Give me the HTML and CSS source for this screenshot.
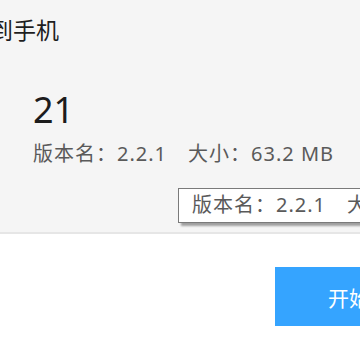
FILE: index.html
```html
<!DOCTYPE html>
<html lang="zh-CN">
<head>
<meta charset="utf-8">
<link rel="stylesheet" href="styles.css">
</head>
<body>
<div class="dialog">
  <div class="top">
    <div class="title">到手机</div>
    <div class="info">
      <div class="name">21</div>
      <div class="meta"><span>版本名：2.2.1</span><span>大小：63.2 MB</span></div>
    </div>
  </div>
  <div class="actions">
    <button class="primary">开始安装</button>
  </div>
  <div class="tooltip"><span>版本名：2.2.1</span><span>大小：63.2 MB</span></div>
</div>
</body>
</html>
```
FILE: styles.css
```css
html, body {
  margin: 0;
  padding: 0;
  width: 360px;
  height: 360px;
  overflow: hidden;
  background: #ffffff;
  font-family: "Noto Sans", "Noto Sans CJK SC", sans-serif;
}
.dialog {
  position: relative;
  width: 360px;
  height: 360px;
  overflow: hidden;
}
.top {
  background: #f5f5f5;
  height: 234px;
  border-bottom: 2px solid #e6e6e6;
  box-sizing: border-box;
  padding-top: 14px;
}
.title {
  font-size: 23px;
  line-height: 32px;
  color: #1e1e1e;
  margin-left: -10px;
  white-space: nowrap;
}
.info {
  padding: 44px 0 0 33px;
}
.name {
  font-size: 36px;
  line-height: 40px;
  color: #1c1c1c;
}
.meta {
  margin-top: 10px;
  font-size: 20px;
  line-height: 28px;
  letter-spacing: 1px;
  color: #5a5a5a;
  display: flex;
  gap: 21px;
  white-space: nowrap;
}
.actions {
  display: flex;
  padding: 33px 0 0 275px;
}
.primary {
  flex: none;
  width: 190px;
  height: 59px;
  border: 0;
  background: #35a4ff;
  color: #ffffff;
  font-family: inherit;
  font-size: 21px;
  padding: 0;
  text-align: center;
}
.tooltip {
  position: absolute;
  left: 178px;
  top: 188px;
  height: 35px;
  width: 260px;
  box-sizing: border-box;
  border: 1px solid #7a7a7a;
  background: #ffffff;
  box-shadow: 3px 3px 2px rgba(0, 0, 0, 0.35);
  padding-left: 13px;
  font-size: 20px;
  line-height: 32px;
  letter-spacing: 1px;
  color: #5a5a5a;
  display: flex;
  gap: 21px;
  white-space: nowrap;
}
```
